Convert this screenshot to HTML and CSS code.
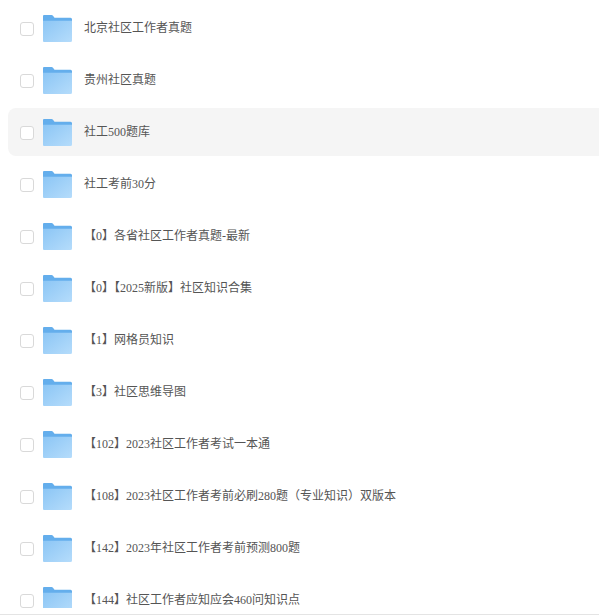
FILE: index.html
```html
<!DOCTYPE html>
<html lang="zh">
<head>
<meta charset="utf-8">
<title>文件列表</title>
<link rel="stylesheet" href="styles.css">
</head>
<body>
<svg class="defs" width="0" height="0" aria-hidden="true">
  <defs>
    <linearGradient id="front" x1="0" y1="0" x2="1" y2="1">
      <stop offset="0" stop-color="#8cc6f5"/>
      <stop offset="1" stop-color="#b5dcfb"/>
    </linearGradient>
    <symbol id="folder" viewBox="0 0 29 27">
      <path d="M0 1a1 1 0 0 1 1-1h7.5a2 2 0 0 1 1.5.7L11.5 2.8H27.5a1.5 1.5 0 0 1 1.5 1.5V8H0z" fill="#64aeec"/>
      <path d="M0 5.8H29V25.5a1.5 1.5 0 0 1-1.5 1.5H1a1 1 0 0 1-1-1z" fill="url(#front)"/>
    </symbol>
  </defs>
</svg>
<main class="viewport">
  <ul class="list">
    <li class="row"><span class="check"></span><svg class="folder"><use href="#folder"/></svg><span class="name">北京社区工作者真题</span></li>
    <li class="row"><span class="check"></span><svg class="folder"><use href="#folder"/></svg><span class="name">贵州社区真题</span></li>
    <li class="row row-active"><span class="check"></span><svg class="folder"><use href="#folder"/></svg><span class="name">社工500题库</span></li>
    <li class="row"><span class="check"></span><svg class="folder"><use href="#folder"/></svg><span class="name">社工考前30分</span></li>
    <li class="row"><span class="check"></span><svg class="folder"><use href="#folder"/></svg><span class="name">【0】各省社区工作者真题-最新</span></li>
    <li class="row"><span class="check"></span><svg class="folder"><use href="#folder"/></svg><span class="name">【0】【2025新版】社区知识合集</span></li>
    <li class="row"><span class="check"></span><svg class="folder"><use href="#folder"/></svg><span class="name">【1】网格员知识</span></li>
    <li class="row"><span class="check"></span><svg class="folder"><use href="#folder"/></svg><span class="name">【3】社区思维导图</span></li>
    <li class="row"><span class="check"></span><svg class="folder"><use href="#folder"/></svg><span class="name">【102】2023社区工作者考试一本通</span></li>
    <li class="row"><span class="check"></span><svg class="folder"><use href="#folder"/></svg><span class="name">【108】2023社区工作者考前必刷280题（专业知识）双版本</span></li>
    <li class="row"><span class="check"></span><svg class="folder"><use href="#folder"/></svg><span class="name">【142】2023年社区工作者考前预测800题</span></li>
    <li class="row"><span class="check"></span><svg class="folder"><use href="#folder"/></svg><span class="name">【144】社区工作者应知应会460问知识点</span></li>
  </ul>
</main>
<div class="footer-rule"></div>
</body>
</html>
```

FILE: styles.css
```css
html, body {
  margin: 0;
  padding: 0;
  height: 100%;
  background: #fff;
  overflow: hidden;
}
.defs { position: absolute; }
.viewport {
  height: 608px;
  overflow: hidden;
}
.footer-rule {
  margin-top: 6px;
  height: 1px;
  background: #e4e4e4;
}
.list {
  list-style: none;
  margin: 4px 0 0 8px;
  padding: 0;
  display: flex;
  flex-direction: column;
  gap: 4px;
}
.row {
  height: 48px;
  display: flex;
  align-items: center;
  padding-left: 12px;
  border-radius: 8px 0 0 8px;
  flex: none;
}
.row-active { background: #f5f5f5; }
.check {
  width: 12px;
  height: 12px;
  border: 1px solid #d9d9d9;
  border-radius: 3px;
  background: #fff;
  margin-top: 2px;
  flex: none;
}
.folder {
  width: 29px;
  height: 27px;
  margin-left: 9px;
  margin-top: 1px;
  flex: none;
}
.name {
  margin-left: 12px;
  margin-bottom: 1px;
  font-family: "Liberation Serif", "Noto Sans CJK SC", serif;
  font-size: 12px;
  line-height: 18px;
  color: #555;
  white-space: nowrap;
}
```
